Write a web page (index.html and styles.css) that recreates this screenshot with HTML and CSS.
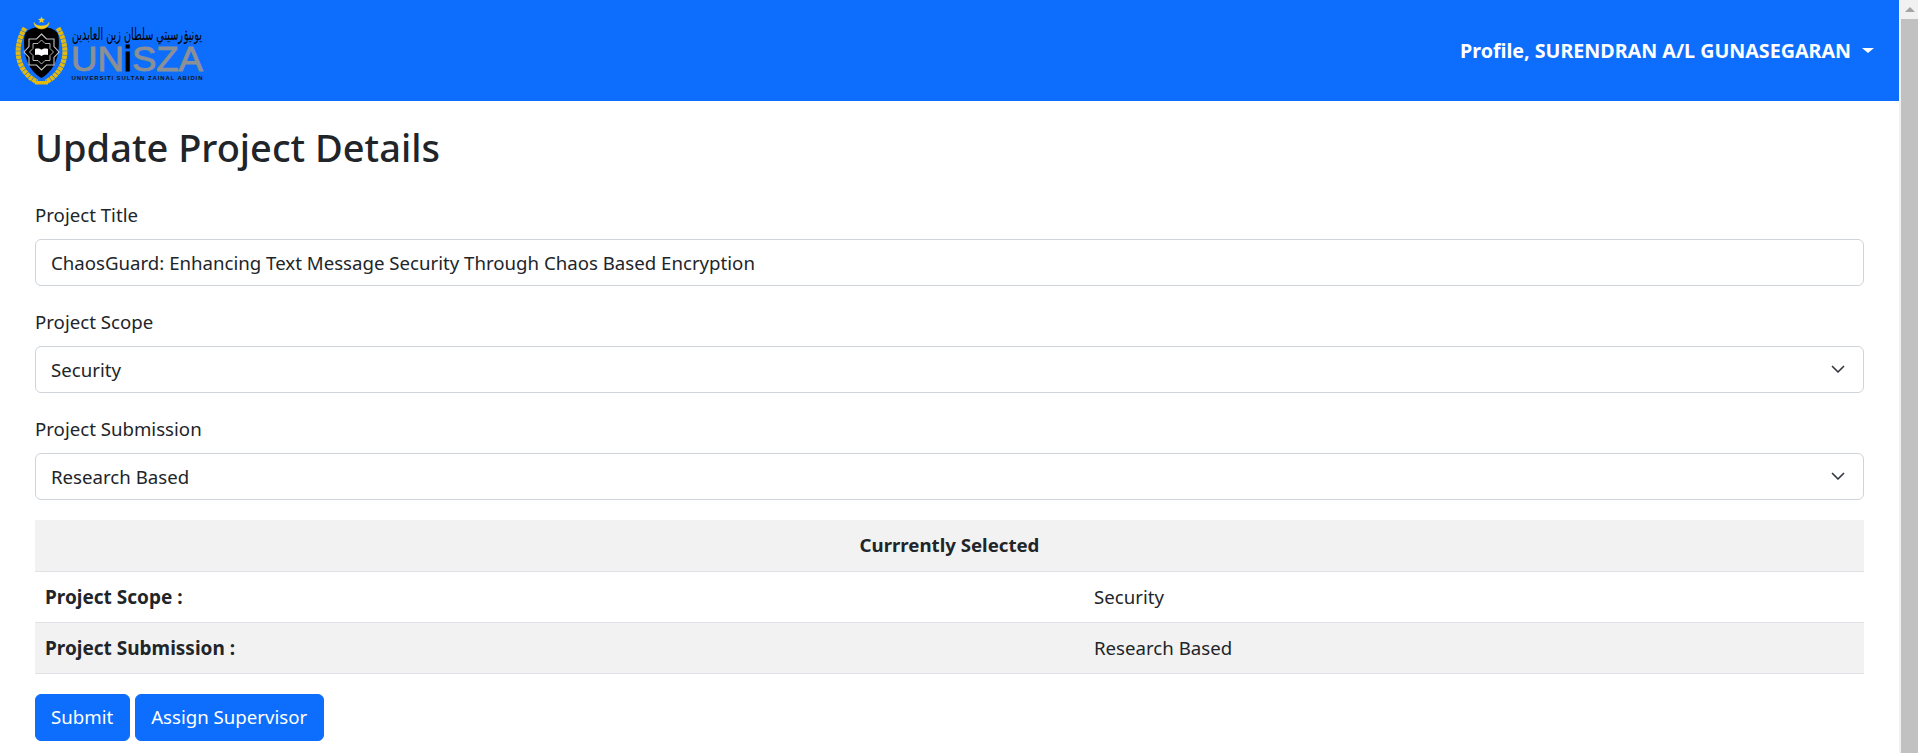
FILE: index.html
```html
<!DOCTYPE html>
<html lang="en">
<head>
<meta charset="utf-8">
<title>Update Project Details</title>
<link rel="stylesheet" href="styles.css">
</head>
<body>
<div class="page">
  <div class="viewport">
    <nav class="navbar">
      <svg class="logo" width="190" height="70" viewBox="15 14 190 70" xmlns="http://www.w3.org/2000/svg" role="img" aria-label="UniSZA logo">
        <g fill="none" stroke="#e2b90c" stroke-linecap="butt">
          <path d="M25 26C14 44 15 68 37 80" stroke-width="5" stroke-dasharray="3.600 .5"/>
          <path d="M58 26C69 44 68 68 46 80" stroke-width="5" stroke-dasharray="3.600 .5"/>
        </g>
        <path d="M35 79h13v3.500H35z" fill="#e2b90c"/>
        <path d="M41.500 25C31 25 25 29 24.500 34C22.500 50 27 68 41.500 76C56 68 60.500 50 58.500 34C58 29 52 25 41.500 25Z" fill="#000"/>
        <path d="M34 20.500a7.500 6.500 0 0 0 15 0a7.700 4.500 0 0 1-15 0Z" fill="#f2cc1f" stroke="#f2cc1f" stroke-width=".6"/>
        <path d="M41.500 14.500l1 2.300 2.500.2-1.900 1.600.6 2.400-2.200-1.300-2.200 1.300.6-2.400-1.900-1.600 2.500-.2Z" fill="#f2cc1f"/>
        <g fill="none" stroke="#c4c4c4" stroke-width="1.100">
          <path d="M41.500 32l5 5h7.500v7.500l5 5.500-5 5.500v7.500h-7.500l-5 5-5-5h-7.500v-7.500l-5-5.500 5-5.500v-7.500h7.500Z"/>
          <path d="M41.500 38l3.500 3.500h5v5l3.500 3.500-3.500 3.500v5h-5l-3.500 3.500-3.500-3.500h-5v-5l-3.500-3.500 3.500-3.500v-5h5Z" stroke-width=".9"/>
        </g>
        <path d="M35 47c2.500-.8 5-.4 6.500.8 1.500-1.200 4-1.600 6.500-.8v6c-2.500-.6-5-.2-6.500 1-1.500-1.200-4-1.600-6.500-1Z" fill="#fff"/>
        <text class="logo-jawi" x="202" y="38" text-anchor="end" textLength="130" lengthAdjust="spacingAndGlyphs">يونيۏرسيتي سلطان زين العابدين</text>
        <text class="logo-word" x="71" y="69" textLength="132" lengthAdjust="spacingAndGlyphs">UN<tspan class="logo-i">i</tspan>SZA</text>
        <text class="logo-sub" x="71.500" y="77.500" textLength="131" lengthAdjust="spacing">UNIVERSITI SULTAN ZAINAL ABIDIN</text>
      </svg>
      <a class="profile" href="#">Profile, SURENDRAN A/L GUNASEGARAN<span class="caret"></span></a>
    </nav>
    <main class="content">
      <h1 class="title">Update Project Details</h1>
      <form class="form">
        <div class="field">
          <label class="label" for="title">Project Title</label>
          <input class="control" id="title" type="text" value="ChaosGuard: Enhancing Text Message Security Through Chaos Based Encryption">
        </div>
        <div class="field">
          <label class="label" for="scope">Project Scope</label>
          <div class="select-wrap">
            <select class="control select" id="scope"><option>Security</option></select>
            <svg class="chevron" width="16" height="16" viewBox="0 0 16 16"><path d="M2.500 5.500l5.500 5.500 5.500-5.500" fill="none" stroke="#343a40" stroke-width="1.700" stroke-linecap="round" stroke-linejoin="round"/></svg>
          </div>
        </div>
        <div class="field field-last">
          <label class="label" for="submission">Project Submission</label>
          <div class="select-wrap">
            <select class="control select" id="submission"><option>Research Based</option></select>
            <svg class="chevron" width="16" height="16" viewBox="0 0 16 16"><path d="M2.500 5.500l5.500 5.500 5.500-5.500" fill="none" stroke="#343a40" stroke-width="1.700" stroke-linecap="round" stroke-linejoin="round"/></svg>
          </div>
        </div>
        <table class="summary">
          <colgroup><col class="col-key"><col></colgroup>
          <thead>
            <tr class="shaded"><th colspan="2">Currrently Selected</th></tr>
          </thead>
          <tbody>
            <tr><th class="key">Project Scope :</th><td>Security</td></tr>
            <tr class="shaded"><th class="key">Project Submission :</th><td>Research Based</td></tr>
          </tbody>
        </table>
        <div class="actions">
          <button class="btn" type="button">Submit</button>
          <button class="btn" type="button">Assign Supervisor</button>
        </div>
      </form>
    </main>
  </div>
  <div class="scrollbar" aria-hidden="true">
    <div class="scroll-up"><span class="scroll-arrow"></span></div>
    <div class="scroll-thumb"></div>
  </div>
</div>
</body>
</html>
```

FILE: styles.css
```css
* { box-sizing: border-box; }
html, body { margin: 0; height: 100%; overflow: hidden; }
body {
  font-family: "Noto Sans", "Open Sans", sans-serif;
  font-size: 18.650px;
  line-height: 24px;
  color: #212529;
  background: #fff;
}
.page { display: flex; height: 753px; }
.viewport { flex: 1; min-width: 0; }

.navbar {
  height: 101px;
  background: #0d6efd;
  display: flex;
  align-items: center;
  justify-content: space-between;
  padding: 0 25px 0 15px;
}
.logo { display: block; overflow: visible; }
.logo-jawi { font-family: "DejaVu Sans", sans-serif; font-size: 17px; fill: #000; }
.logo-word { font-family: "Liberation Sans", sans-serif; font-weight: 400; font-size: 35px; fill: #8b9096; stroke: #8b9096; stroke-width: .9px; }
.logo-i { fill: #000; stroke: #000; }
.logo-sub { font-family: "Liberation Sans", sans-serif; font-weight: 700; font-size: 6px; fill: #111; }
.profile {
  color: #fff;
  font-weight: 700;
  font-size: 19.670px;
  text-decoration: none;
  display: flex;
  align-items: center;
}
.caret {
  margin-left: 11px;
  border-top: 5px solid #fff;
  border-left: 6px solid transparent;
  border-right: 6px solid transparent;
}

.content { padding: 22px 35px 0; }
.title { margin: 0 0 32px; font-size: 38px; line-height: 48px; font-weight: 500; }
.field { margin-bottom: 24px; }
.field-last { margin-bottom: 20px; }
.label { display: block; margin-bottom: 12px; }
.control {
  display: block;
  width: 100%;
  height: 47px;
  padding: 0 15px;
  border: 1px solid #ced4da;
  border-radius: 6px;
  background: #fff;
  color: #212529;
  font: inherit;
  appearance: none;
}
.select-wrap { position: relative; }
.chevron { position: absolute; right: 18px; top: 15px; pointer-events: none; }

.summary { width: 100%; border-collapse: collapse; table-layout: fixed; margin-bottom: 20px; }
.col-key { width: 1049px; }
.summary th, .summary td {
  height: 51px;
  padding: 0 10px;
  border-bottom: 1px solid #dee2e6;
  font-weight: 400;
  text-align: left;
}
.summary thead th { text-align: center; font-weight: 700; }
.summary .key { font-weight: 700; font-size: 19px; }
.shaded { background: #f2f2f2; }

.actions { display: flex; gap: 5px; }
.btn {
  height: 47px;
  padding: 0 16px 0 15px;
  border: 1px solid #0d6efd;
  border-radius: 6px;
  background: #0d6efd;
  color: #fff;
  font: inherit;
}

.scrollbar {
  width: 19px;
  height: 100%;
  flex: none;
  background: #f1f1f1;
  padding-left: 2px;
  display: flex;
  flex-direction: column;
}
.scroll-up { height: 19px; display: flex; align-items: center; justify-content: center; background: #f1f1f1; }
.scroll-arrow {
  border-bottom: 5px solid #a3a3a3;
  border-left: 5px solid transparent;
  border-right: 5px solid transparent;
}
.scroll-thumb { flex: 1; background: #c1c1c1; }
```
